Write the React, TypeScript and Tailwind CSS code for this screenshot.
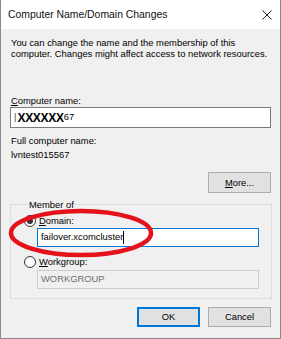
import React from "react";

function Radio({ checked }: { checked?: boolean }) {
  return (
    <span className="w-[12px] h-[12px] rounded-full border border-[#333] bg-white flex items-center justify-center">
      {checked && <span className="w-[6px] h-[6px] rounded-full bg-[#333]" />}
    </span>
  );
}

export default function App() {
  return (
    <div className="relative w-[281px] h-[339px] bg-[#f0f0f0] border-x border-b border-[#8a8a8a] flex flex-col font-['Liberation_Sans',Arial,sans-serif] text-[9.4px] text-black">
      {/* Title bar */}
      <div className="h-[29px] bg-white flex items-center justify-between pl-[7px] pr-[7px] shrink-0">
        <span className="text-[10.4px] text-[#111]">Computer Name/Domain Changes</span>
        <svg width="10" height="10" viewBox="0 0 10 10" className="mr-[1px]">
          <path d="M0.5 0.5 L9.5 9.5 M9.5 0.5 L0.5 9.5" stroke="#222" strokeWidth="1" />
        </svg>
      </div>

      {/* Body */}
      <div className="flex flex-col pl-[9px] pr-[9px]">
        <p className="mt-[8px] pl-[1px] leading-[11px]">
          You can change the name and the membership of this
          <br />
          computer. Changes might affect access to network resources.
        </p>

        <div className="mt-[36px] pl-[1px] leading-[11px]">
          <span className="underline">C</span>omputer name:
        </div>
        <div className="mt-[1px] w-[261px] h-[21px] bg-white border border-[#7a7a7a] flex items-center pl-[3px]">
          <span className="text-[#444] mr-[1px]">|</span>
          <span className="font-bold text-[12px] tracking-[-0.3px]">XXXXXX</span>
          <span>67</span>
        </div>

        <div className="mt-[6px] pl-[1px] leading-[14px]">Full computer name:</div>
        <div className="pl-[1px] leading-[14px]">lvntest015567</div>

        <div className="mt-[10px] flex justify-end">
          <button className="w-[63px] h-[21px] bg-[#e1e1e1] border border-[#adadad] leading-none">
            <span className="underline">M</span>ore...
          </button>
        </div>

        {/* Member of group */}
        <fieldset className="mt-[6px] w-[261px] h-[100px] border border-[#dcdcdc] pl-[10px] pr-[12px]">
          <legend className="ml-[7px] px-[1px] leading-[11px]">Member of</legend>
          <div className="mt-[5px] flex items-center gap-[3px] h-[12px] pl-[3px]">
            <Radio checked />
            <span>
              <span className="underline">D</span>omain:
            </span>
          </div>
          <div className="mt-[1px] ml-[16px] w-[222px] h-[19px] bg-white border border-[#0078d7] flex items-center pl-[3px]">
            <span>failover.xcomcluster</span>
            <span className="w-[1px] h-[13px] bg-black" />
          </div>
          <div className="mt-[9px] flex items-center gap-[3px] h-[12px] pl-[3px]">
            <Radio />
            <span>
              <span className="underline">W</span>orkgroup:
            </span>
          </div>
          <div className="mt-[2px] ml-[16px] w-[222px] h-[19px] bg-[#f0f0f0] border border-[#cccccc] flex items-center pl-[3px] text-[#6d6d6d]">
            WORKGROUP
          </div>
        </fieldset>

        <div className="mt-[8px] flex justify-end gap-[8px]">
          <button className="w-[63px] h-[20px] bg-[#e1e1e1] border-2 border-[#0078d7] leading-none">OK</button>
          <button className="w-[63px] h-[20px] bg-[#e1e1e1] border border-[#adadad] leading-none">Cancel</button>
        </div>
      </div>

      {/* red highlight */}
      <svg className="absolute left-[6px] top-[207px] pointer-events-none" width="148" height="52" viewBox="0 0 148 52">
        <ellipse cx="74" cy="26" rx="70" ry="22" fill="none" stroke="#e3121b" strokeWidth="4.5" />
      </svg>
    </div>
  );
}
